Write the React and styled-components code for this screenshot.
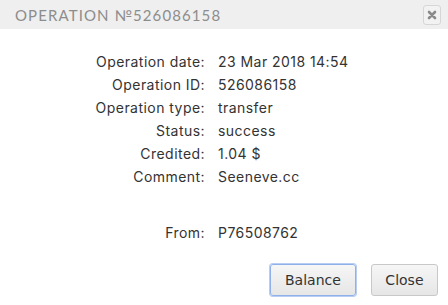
import React from 'react'
import styled, { createGlobalStyle } from 'styled-components'

const Global = createGlobalStyle`
  html, body { margin: 0; padding: 0; background: #fff; }
`

const Dialog = styled.div`
  width: 448px;
  height: 305px;
  background: #fff;
  display: flex;
  flex-direction: column;
`

const Header = styled.div`
  height: 29px;
  background: #efefef;
  display: flex;
  align-items: center;
  justify-content: space-between;
  padding: 0 7px 0 15px;
`

const Title = styled.div`
  font-family: "Lato", sans-serif;
  font-size: 15px;
  letter-spacing: 1.1px;
  color: #8d8d8d;
  text-transform: uppercase;
`

const CloseX = styled.div`
  width: 16px;
  height: 18px;
  border: 1px solid #d6d6d6;
  border-radius: 3px;
  background: #f2f2f2;
  display: flex;
  align-items: center;
  justify-content: center;
`

const Body = styled.div`
  padding: 21px 0 0 15px;
  display: grid;
  grid-template-columns: 190px auto;
  column-gap: 13px;
  font-family: "Inter", sans-serif;
  font-size: 14px;
  letter-spacing: 0.45px;
  line-height: 23.1px;
  color: #333;
`

const Label = styled.div`
  text-align: right;
  margin-top: ${p => p.$gap || 0}px;
`

const Value = styled.div`
  margin-top: ${p => p.$gap || 0}px;
`

const Footer = styled.div`
  display: flex;
  justify-content: flex-end;
  gap: 15px;
  padding: 20px 10px 0 0;
`

const Button = styled.button`
  height: 32px;
  padding: 0 ${p => p.$pad}px;
  font-family: "DejaVu Sans", Verdana, sans-serif;
  font-size: 14px;
  color: #333;
  background: linear-gradient(#f6f6f6, #e6e6e6);
  border: 1px solid ${p => (p.$focus ? '#8fb0e8' : '#c8c8c8')};
  box-shadow: ${p => (p.$focus ? '0 0 0 1px #b7cdf2' : 'none')};
  border-radius: 3px;
`

const rows = [
  ['Operation date:', '23 Mar 2018 14:54'],
  ['Operation ID:', '526086158'],
  ['Operation type:', 'transfer'],
  ['Status:', 'success'],
  ['Credited:', '1.04 $'],
  ['Comment:', 'Seeneve.cc'],
  ['From:', 'P76508762', 32],
]

export default function App() {
  return (
    <Dialog>
      <Global />
      <Header>
        <Title>Operation №526086158</Title>
        <CloseX>
          <svg width="10" height="10" viewBox="0 0 10 10">
            <path d="M2 2L8 8M8 2L2 8" stroke="#8a8a8a" strokeWidth="2.6" strokeLinecap="round" />
          </svg>
        </CloseX>
      </Header>
      <Body>
        {rows.map(([l, v, g]) => (
          <React.Fragment key={l}>
            <Label $gap={g}>{l}</Label>
            <Value $gap={g}>{v}</Value>
          </React.Fragment>
        ))}
      </Body>
      <Footer>
        <Button $focus $pad={14}>Balance</Button>
        <Button $pad={13.5}>Close</Button>
      </Footer>
    </Dialog>
  )
}
